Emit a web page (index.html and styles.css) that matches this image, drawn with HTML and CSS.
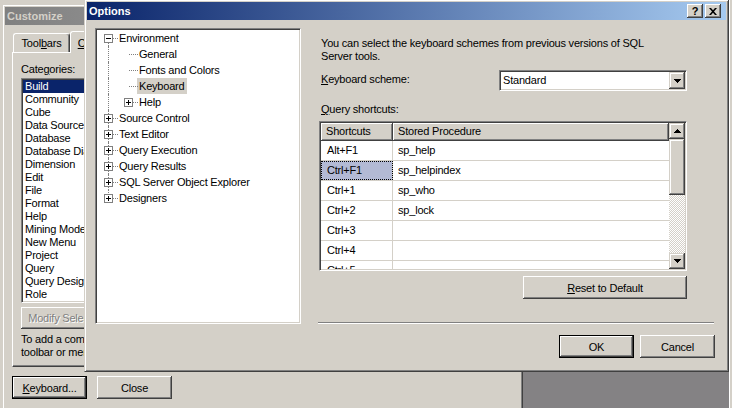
FILE: index.html
```html
<!DOCTYPE html>
<html lang="en">
<head>
<meta charset="utf-8">
<title>Options</title>
<link rel="stylesheet" href="styles.css">
</head>
<body>
<div class="desktop">
  <div class="bgwin bg-left"></div>
  <div class="bgwin bg-right"></div>

  <section class="win customize">
    <header class="titlebar inactive"><span class="ttl">Customize</span></header>
    <div class="cz-body">
      <nav class="tabs">
        <div class="tab">Tool<u>b</u>ars</div>
        <div class="tab active"><u>C</u>ommands</div>
      </nav>
      <div class="tabpanel">
        <div class="lbl">Cate<u>g</u>ories:</div>
        <div class="listbox">
          <div class="li sel">Build</div>
          <div class="li">Community</div>
          <div class="li">Cube</div>
          <div class="li">Data Source</div>
          <div class="li">Database</div>
          <div class="li">Database Diagram</div>
          <div class="li">Dimension</div>
          <div class="li">Edit</div>
          <div class="li">File</div>
          <div class="li">Format</div>
          <div class="li">Help</div>
          <div class="li">Mining Model</div>
          <div class="li">New Menu</div>
          <div class="li">Project</div>
          <div class="li">Query</div>
          <div class="li">Query Designer</div>
          <div class="li">Role</div>
        </div>
        <div class="btn disabled modify">Modify Selection</div>
        <p class="hint">To add a command to a toolbar: select a category and drag the command out of this dialog box to a<br>toolbar or menu.</p>
      </div>
      <div class="cz-foot">
        <div class="btn default"><u>K</u>eyboard...</div>
        <div class="btn">Close</div>
      </div>
    </div>
  </section>

  <section class="win options">
    <header class="titlebar">
      <span class="ttl">Options</span>
      <span class="capbtn">?</span>
      <span class="capbtn"><svg width="8" height="7" viewBox="0 0 8 7"><path d="M0 0h2l2 2.3L6 0h2L5 3.5 8 7H6L4 4.7 2 7H0l3-3.5z" fill="#000"/></svg></span>
    </header>
    <div class="opt-body">
      <div class="tree">
        <div class="tn"><span class="g vb hl"><svg class="pm" width="9" height="9" viewBox="0 0 9 9"><rect x=".5" y=".5" width="8" height="8" fill="#fff" stroke="#808080"/><path d="M2 4.5h5" stroke="#000"/></svg></span><span class="t">Environment</span></div>
        <div class="tn"><span class="g vl"></span><span class="g hl"></span><span class="t">General</span></div>
        <div class="tn"><span class="g vl"></span><span class="g hl"></span><span class="t">Fonts and Colors</span></div>
        <div class="tn"><span class="g vl"></span><span class="g hl"></span><span class="t sel">Keyboard</span></div>
        <div class="tn"><span class="g vl"></span><span class="g hl"><svg class="pm" width="9" height="9" viewBox="0 0 9 9"><rect x=".5" y=".5" width="8" height="8" fill="#fff" stroke="#808080"/><path d="M2 4.5h5M4.5 2v5" stroke="#000"/></svg></span><span class="t">Help</span></div>
        <div class="tn"><span class="g vl hl"><svg class="pm" width="9" height="9" viewBox="0 0 9 9"><rect x=".5" y=".5" width="8" height="8" fill="#fff" stroke="#808080"/><path d="M2 4.5h5M4.5 2v5" stroke="#000"/></svg></span><span class="t">Source Control</span></div>
        <div class="tn"><span class="g vl hl"><svg class="pm" width="9" height="9" viewBox="0 0 9 9"><rect x=".5" y=".5" width="8" height="8" fill="#fff" stroke="#808080"/><path d="M2 4.5h5M4.5 2v5" stroke="#000"/></svg></span><span class="t">Text Editor</span></div>
        <div class="tn"><span class="g vl hl"><svg class="pm" width="9" height="9" viewBox="0 0 9 9"><rect x=".5" y=".5" width="8" height="8" fill="#fff" stroke="#808080"/><path d="M2 4.5h5M4.5 2v5" stroke="#000"/></svg></span><span class="t">Query Execution</span></div>
        <div class="tn"><span class="g vl hl"><svg class="pm" width="9" height="9" viewBox="0 0 9 9"><rect x=".5" y=".5" width="8" height="8" fill="#fff" stroke="#808080"/><path d="M2 4.5h5M4.5 2v5" stroke="#000"/></svg></span><span class="t">Query Results</span></div>
        <div class="tn"><span class="g vl hl"><svg class="pm" width="9" height="9" viewBox="0 0 9 9"><rect x=".5" y=".5" width="8" height="8" fill="#fff" stroke="#808080"/><path d="M2 4.5h5M4.5 2v5" stroke="#000"/></svg></span><span class="t">SQL Server Object Explorer</span></div>
        <div class="tn"><span class="g vt hl"><svg class="pm" width="9" height="9" viewBox="0 0 9 9"><rect x=".5" y=".5" width="8" height="8" fill="#fff" stroke="#808080"/><path d="M2 4.5h5M4.5 2v5" stroke="#000"/></svg></span><span class="t">Designers</span></div>
      </div>

      <div class="opt-right">
        <p class="desc">You can select the keyboard schemes from previous versions of SQL<br>Server tools.</p>
        <div class="krow">
          <span class="klabel"><u>K</u>eyboard scheme:</span>
          <div class="combo">
            <span class="val">Standard</span>
            <span class="drop"><svg width="7" height="4" viewBox="0 0 7 4"><path d="M0 0h7v1H6v1H5v1H4v1H3V3H2V2H1V1H0z" fill="#000"/></svg></span>
          </div>
        </div>
        <div class="qlabel"><u>Q</u>uery shortcuts:</div>
        <div class="kgrid">
          <div class="kg-main">
            <div class="kg-row kg-head"><div class="c1">Shortcuts</div><div class="c2">Stored Procedure</div></div>
            <div class="kg-row"><div class="c1">Alt+F1</div><div class="c2">sp_help</div></div>
            <div class="kg-row"><div class="c1 cur">Ctrl+F1</div><div class="c2">sp_helpindex</div></div>
            <div class="kg-row"><div class="c1">Ctrl+1</div><div class="c2">sp_who</div></div>
            <div class="kg-row"><div class="c1">Ctrl+2</div><div class="c2">sp_lock</div></div>
            <div class="kg-row"><div class="c1">Ctrl+3</div><div class="c2"></div></div>
            <div class="kg-row"><div class="c1">Ctrl+4</div><div class="c2"></div></div>
            <div class="kg-row"><div class="c1">Ctrl+5</div><div class="c2"></div></div>
          </div>
          <div class="vscroll">
            <div class="sb-btn"><svg width="7" height="4" viewBox="0 0 7 4"><path d="M3 0h1v1h1v1h1v1h1v1H0V3h1V2h1V1h1z" fill="#000"/></svg></div>
            <div class="sb-thumb"></div>
            <div class="sb-track"></div>
            <div class="sb-btn"><svg width="7" height="4" viewBox="0 0 7 4"><path d="M0 0h7v1H6v1H5v1H4v1H3V3H2V2H1V1H0z" fill="#000"/></svg></div>
          </div>
        </div>
        <div class="btn reset"><u>R</u>eset to Default</div>
        <div class="sep"></div>
      </div>
    </div>
    <div class="opt-foot">
      <div class="btn default">OK</div>
      <div class="btn">Cancel</div>
    </div>
  </section>
</div>
</body>
</html>
```

FILE: styles.css
```css
* { box-sizing: border-box; }
html, body { margin: 0; padding: 0; }
body {
  width: 732px; height: 408px; overflow: hidden;
  font-family: Tahoma, "Liberation Sans", Arial, sans-serif;
  font-size: 11px; letter-spacing: -0.2px; color: #000;
  background: #848284;
}
p { margin: 0; }
u { text-decoration: underline; text-underline-offset: 1px; }

.desktop { position: relative; width: 732px; height: 408px; overflow: hidden; background: #848284; }
.bgwin { position: absolute; background: #D4D0C8; z-index: 0; }
.bg-left { left: -20px; top: -20px; width: 120px; height: 450px; }
.bg-right { left: 729px; top: -20px; width: 30px; height: 450px; border-left: 1px solid #fff; }

/* window frame */
.win {
  position: absolute; display: flex; flex-direction: column;
  background: #D4D0C8;
  border: 1px solid; border-color: #D4D0C8 #404040 #404040 #D4D0C8;
  box-shadow: inset 1px 1px #fff, inset -1px -1px #808080;
  padding: 2px;
}
.customize { left: 2px; top: 4px; width: 521px; height: 410px; z-index: 1; }
.options { left: 84px; top: -1px; width: 645px; height: 373px; z-index: 2; }

.titlebar {
  flex: none; height: 18px; display: flex; align-items: center; gap: 2px;
  padding: 0 5px 0 2px;
  background: linear-gradient(90deg, #0A246A, #A6CAF0);
  color: #fff; font-weight: bold; letter-spacing: 0;
}
.titlebar.inactive { background: linear-gradient(90deg, #808080, #C0C0C0); color: #D4D0C8; }
.ttl { flex: 1; white-space: nowrap; }
.capbtn {
  width: 16px; height: 14px; display: flex; align-items: center; justify-content: center;
  color: #000; background: #D4D0C8; font-size: 11px;
  box-shadow: inset -1px -1px #404040, inset 1px 1px #fff, inset -2px -2px #808080;
}

/* buttons */
.btn {
  width: 75px; height: 23px; display: flex; align-items: center; justify-content: center;
  background: #D4D0C8; white-space: nowrap;
  box-shadow: inset -1px -1px #404040, inset 1px 1px #fff, inset -2px -2px #808080;
}
.btn.default { border: 1px solid #000; }
.btn.disabled { color: #808080; text-shadow: 1px 1px #fff; }

/* customize dialog */
.cz-body { flex: 1; display: flex; flex-direction: column; padding: 6px 0 0 7px; }
.tabs { display: flex; align-items: flex-end; height: 21px; margin-left: 1px; position: relative; z-index: 1; }
.tab {
  height: 19px; width: 57px; display: flex; align-items: center; justify-content: center;
  background: #D4D0C8; white-space: nowrap;
  border-top: 1px solid #fff; border-left: 1px solid #fff; border-right: 1px solid #404040;
  border-radius: 3px 3px 0 0; box-shadow: inset -1px 0 #808080;
}
.tab.active { height: 22px; width: 70px; margin-bottom: -1px; }
.tabpanel {
  width: 504px; height: 315px; flex: none;
  border: 1px solid; border-color: #fff #404040 #404040 #fff;
  box-shadow: inset -1px -1px #808080;
  padding: 10px 0 0 8px;
}
.lbl { line-height: 13px; }
.listbox {
  width: 150px; margin-top: 2px; background: #fff; padding: 1px;
  border: 1px solid; border-color: #808080 #fff #fff #808080;
  box-shadow: inset 1px 1px #404040, inset -1px -1px #D4D0C8;
}
.li { height: 13px; line-height: 13px; padding-left: 2px; white-space: nowrap; }
.li.sel { background: #0A246A; color: #fff; }
.modify { width: 92px; height: 22px; margin-top: 4px; }
.hint { margin-top: 4px; line-height: 13px; white-space: nowrap; }
.cz-foot { display: flex; gap: 10px; margin-top: 9px; }

/* options dialog */
.opt-body { flex: none; display: flex; gap: 17px; padding: 8px 0 0 8px; }
.tree {
  flex: none; width: 206px; height: 296px; background: #fff;
  border: 1px solid; border-color: #808080 #fff #fff #808080;
  box-shadow: inset 1px 1px #404040, inset -1px -1px #D4D0C8;
  padding: 1px 1px 1px 2px;
}
.tn { display: flex; height: 16px; align-items: center; white-space: nowrap; }
.g { position: relative; width: 20px; height: 16px; flex: none; }
.g.vl::before, .g.vt::before, .g.vb::before {
  content: ""; position: absolute; left: 10px; border-left: 1px dotted #808080;
}
.g.vl::before { top: 0; bottom: 0; }
.g.vt::before { top: 0; height: 9px; }
.g.vb::before { top: 8px; bottom: 0; }
.g.hl::after { content: ""; position: absolute; left: 11px; right: 0; top: 8px; border-top: 1px dotted #808080; }
.pm { position: absolute; left: 6px; top: 4px; z-index: 1; display: block; }
.t { line-height: 16px; padding: 0 2px; margin-left: -1px; }
.t.sel { background: #D4D0C8; }

.opt-right { flex: none; width: 397px; display: flex; flex-direction: column; }
.desc { margin: 9px 0 0 3px; line-height: 13px; }
.krow { display: flex; align-items: flex-start; margin-top: 7px; padding-left: 3px; }
.klabel { width: 178px; margin-top: 3px; line-height: 13px; }
.combo {
  width: 188px; height: 21px; display: flex; background: #fff; padding: 1px;
  border: 1px solid; border-color: #808080 #fff #fff #808080;
  box-shadow: inset 1px 1px #404040, inset -1px -1px #D4D0C8;
}
.combo .val { flex: 1; padding-left: 2px; line-height: 17px; }
.combo .drop {
  width: 16px; height: 17px; display: flex; align-items: center; justify-content: center;
  background: #D4D0C8;
  box-shadow: inset -1px -1px #404040, inset 1px 1px #D4D0C8, inset -2px -2px #808080, inset 2px 2px #fff;
}
.qlabel { margin: 12px 0 0 3px; line-height: 13px; }

.kgrid {
  display: flex; width: 368px; height: 150px; margin: 5px 0 0 1px; background: #fff; padding: 1px;
  border: 1px solid; border-color: #808080 #fff #fff #808080;
  box-shadow: inset 1px 1px #404040, inset -1px -1px #D4D0C8;
}
.kg-main { flex: 1; overflow: hidden; }
.kg-row { display: flex; height: 20px; border-bottom: 1px solid #D4D0C8; }
.kg-row > div { line-height: 19px; white-space: nowrap; }
.c1 { width: 72px; flex: none; border-right: 1px solid #D4D0C8; padding-left: 6px; }
.c2 { flex: 1; padding-left: 5px; }
.kg-head { height: 18px; border-bottom: none; }
.kg-head > div {
  background: #D4D0C8; line-height: 17px;
  border-right: 1px solid #404040; border-bottom: 1px solid #404040;
  box-shadow: inset 1px 1px #fff, inset -1px -1px #808080;
}
.kg-head .c1 { padding-left: 5px; }
.c1.cur { background: #B3BAD5; outline: 1px dotted #000; outline-offset: -1px; }
.vscroll { width: 16px; flex: none; display: flex; flex-direction: column; }
.sb-btn, .sb-thumb {
  background: #D4D0C8;
  box-shadow: inset -1px -1px #404040, inset 1px 1px #D4D0C8, inset -2px -2px #808080, inset 2px 2px #fff;
}
.sb-btn { height: 16px; display: flex; align-items: center; justify-content: center; }
.sb-thumb { height: 56px; }
.sb-track { flex: 1; background: repeating-conic-gradient(#D4D0C8 0 25%, #fff 0 50%) 0 0 / 2px 2px; }
.reset { width: 164px; margin: 5px 0 0 205px; }
.sep { margin-top: auto; width: 396px; height: 2px; border-top: 1px solid #808080; border-bottom: 1px solid #fff; }
.opt-foot { display: flex; justify-content: flex-end; gap: 6px; padding: 11px 11px 0 0; }
```
